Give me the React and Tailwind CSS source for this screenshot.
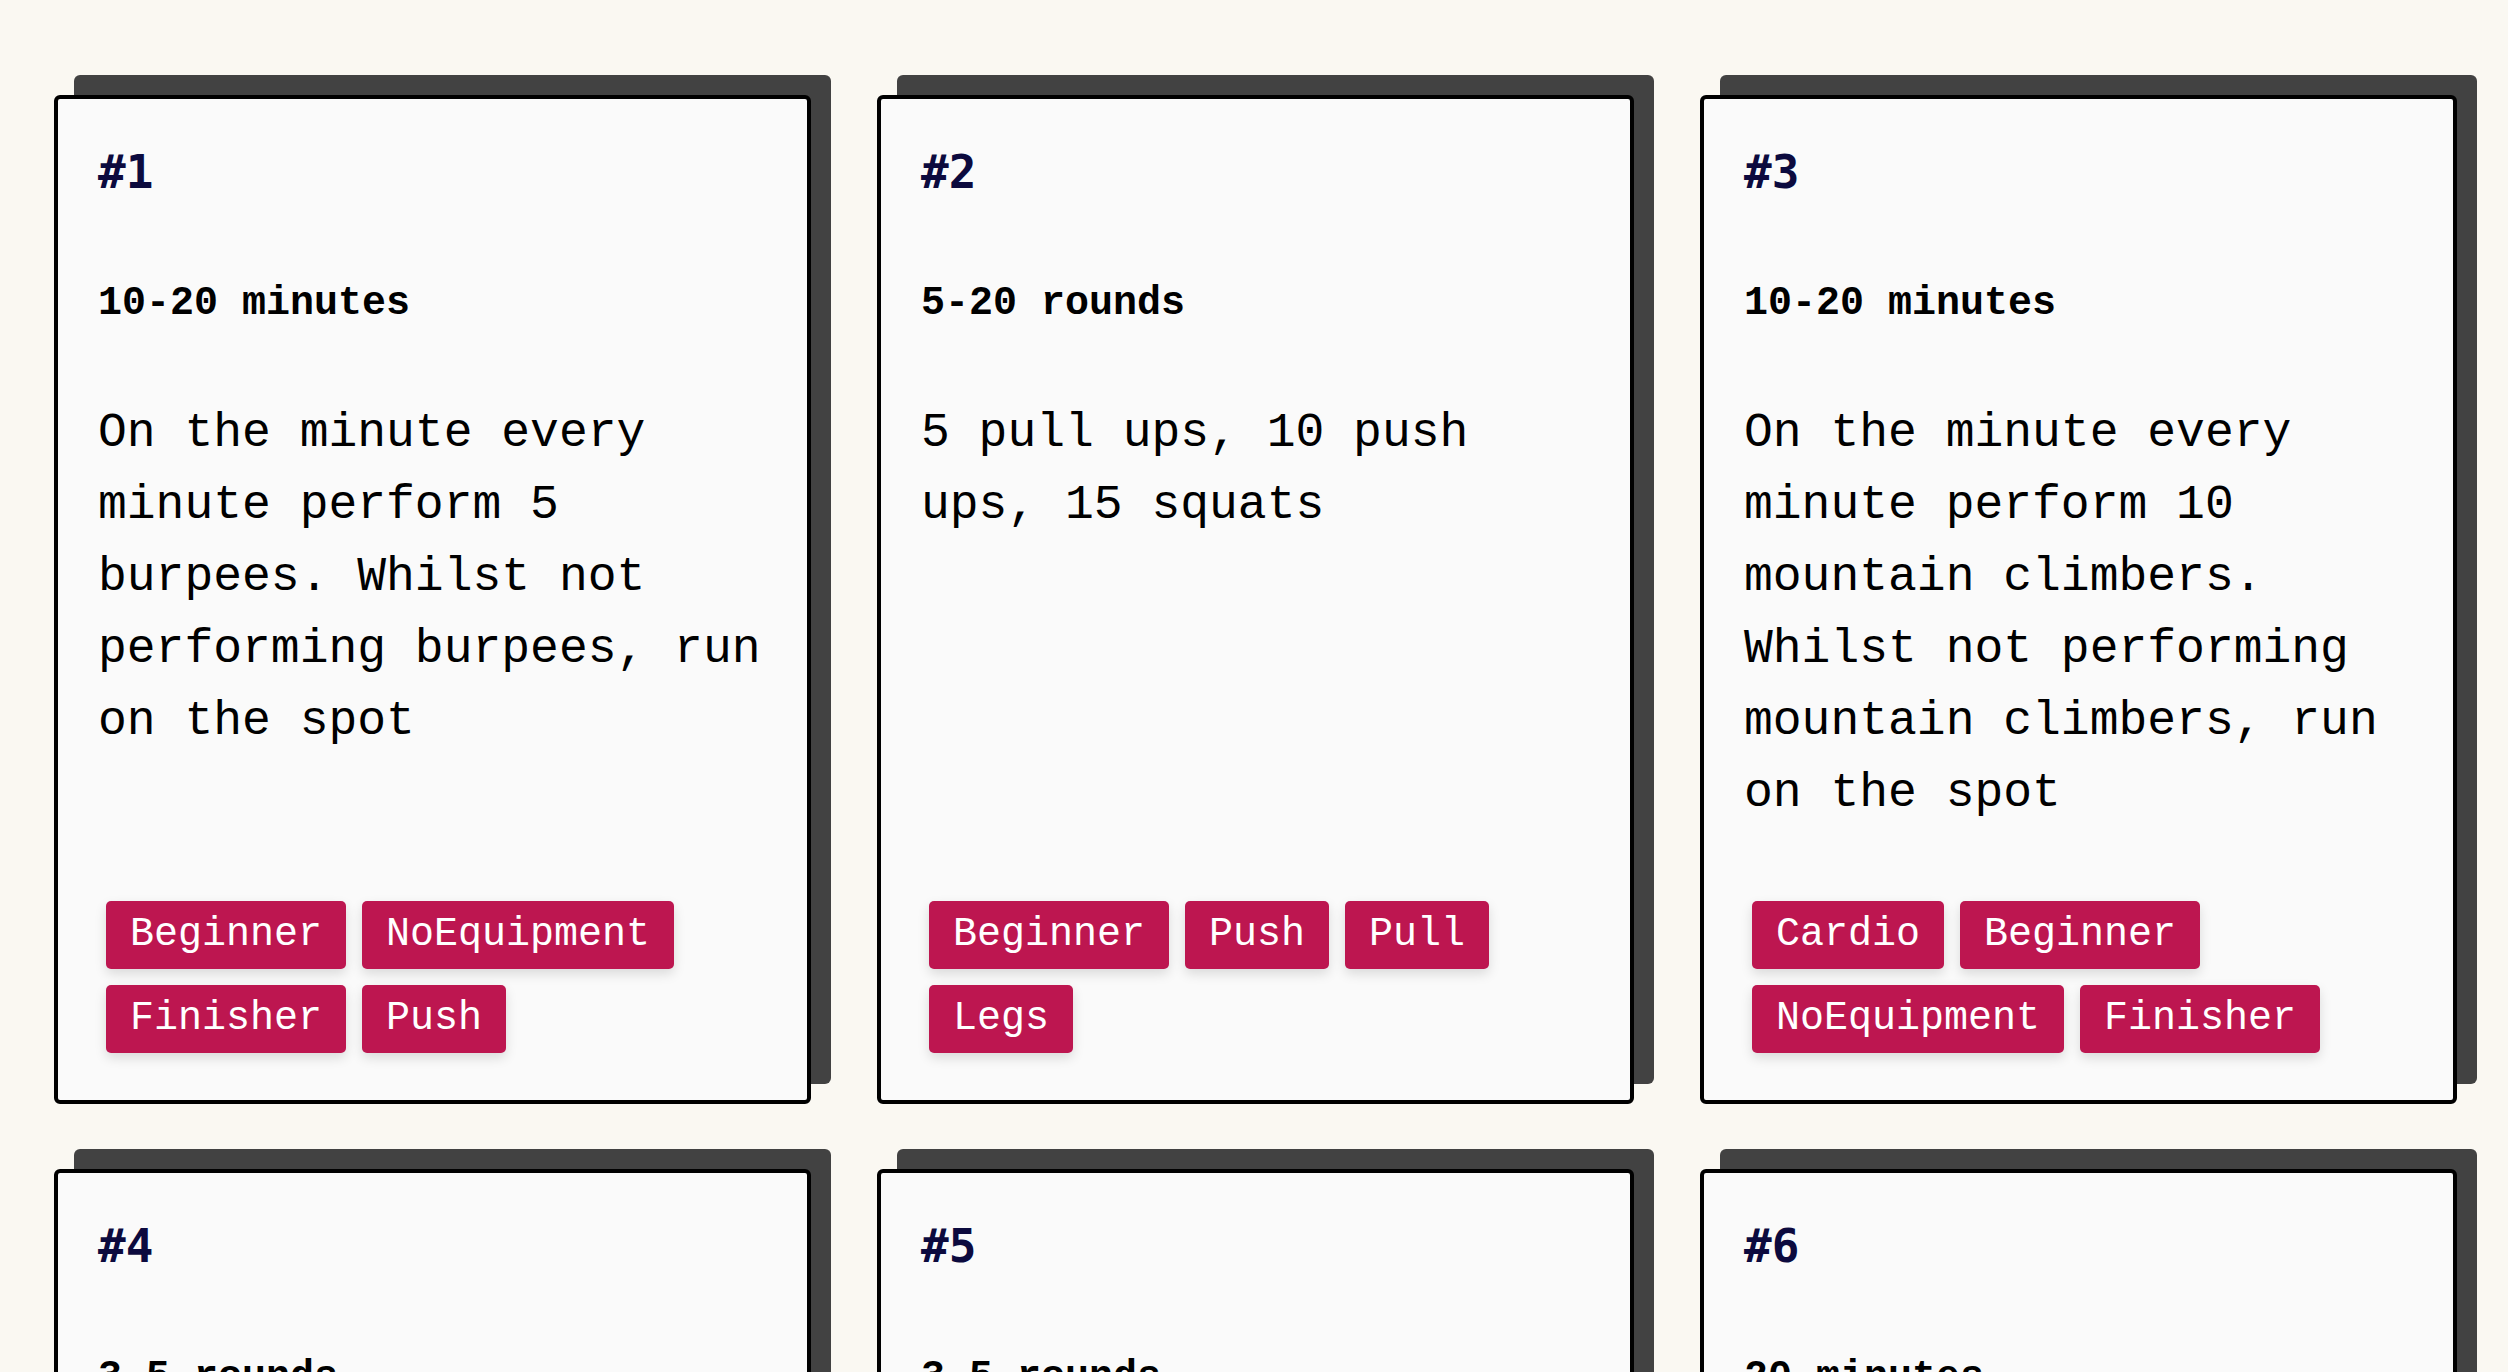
const workouts = [
  {
    id: 1,
    length: "10-20 minutes",
    description:
      "On the minute every minute perform 5 burpees. Whilst not performing burpees, run on the spot",
    tags: ["Beginner", "NoEquipment", "Finisher", "Push"],
  },
  {
    id: 2,
    length: "5-20 rounds",
    description: "5 pull ups, 10 push ups, 15 squats",
    tags: ["Beginner", "Push", "Pull", "Legs"],
  },
  {
    id: 3,
    length: "10-20 minutes",
    description:
      "On the minute every minute perform 10 mountain climbers. Whilst not performing mountain climbers, run on the spot",
    tags: ["Cardio", "Beginner", "NoEquipment", "Finisher"],
  },
  {
    id: 4,
    length: "3-5 rounds",
    description: "20 squats, 15 lunges each leg, 10 jump squats",
    tags: ["Beginner", "Legs", "NoEquipment"],
  },
  {
    id: 5,
    length: "3-5 rounds",
    description: "10 push ups, 20 sit ups, 30 second plank",
    tags: ["Beginner", "Push", "Core"],
  },
  {
    id: 6,
    length: "20 minutes",
    description: "As many rounds as possible of 5 burpees, 10 squats",
    tags: ["Cardio", "Intermediate", "NoEquipment"],
  },
];

function Tag({ label }) {
  return (
    <span className="rounded-[5px] bg-[#bd1650] px-[24px] py-[11px] text-[40px] leading-[46px] text-white shadow-[0_5px_12px_rgba(0,0,0,0.13)]">
      {label}
    </span>
  );
}

function WorkoutCard({ workout }) {
  return (
    <div className="flex flex-col rounded-[6px] border-4 border-black bg-[#fafafa] px-[40px] pt-[40px] pb-[47px] shadow-[20px_-20px_0_0_#424242]">
      <h2 className="font-['DejaVu_Sans_Mono',monospace] text-[46px] leading-[66px] font-bold text-[#0c0a3e]">
        #{workout.id}
      </h2>
      <h3 className="mt-[69px] text-[40px] leading-[60px] font-bold text-black">
        {workout.length}
      </h3>
      <p className="mt-[63px] flex-1 text-[48px] leading-[72px] text-black">
        {workout.description}
      </p>
      <div className="mt-[72px] flex flex-wrap gap-4 pl-2">
        {workout.tags.map((tag) => (
          <Tag key={tag} label={tag} />
        ))}
      </div>
    </div>
  );
}

export default function App() {
  return (
    <div className="min-h-screen bg-[#faf8f2] pt-[95px] pb-[95px] pl-[54px] font-['Liberation_Mono','Courier_New',monospace]">
      <div className="grid grid-cols-[repeat(3,757px)] gap-x-[66px] gap-y-[65px]">
        {workouts.map((workout) => (
          <WorkoutCard key={workout.id} workout={workout} />
        ))}
      </div>
    </div>
  );
}
